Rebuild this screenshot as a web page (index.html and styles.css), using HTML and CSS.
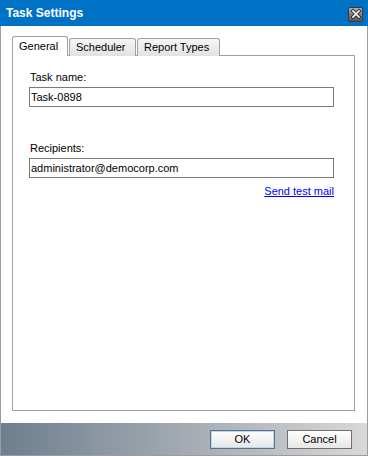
FILE: index.html
```html
<!DOCTYPE html>
<html lang="en">

<head>
  <meta charset="UTF-8">
  <meta name="viewport" content="width=device-width, initial-scale=1.0">
  <title>Task Settings</title>
  <link rel="stylesheet" href="styles.css">
</head>

<body>
  <div class="dialog">
    <div class="titlebar">
      <span class="title">Task Settings</span>
      <span class="close-btn">
        <svg width="12" height="12" viewBox="0 0 12 12">
          <path d="M3 3 L9 9 M9 3 L3 9" stroke="#2e2e2e" stroke-width="3.6" stroke-linecap="square" fill="none" />
          <path d="M3 3 L9 9 M9 3 L3 9" stroke="#ffffff" stroke-width="1.7" stroke-linecap="square" fill="none" />
        </svg>
      </span>
    </div>

    <div class="content">
      <!-- Tabs -->
      <div class="tabs">
        <div class="tab active">General</div>
        <div class="tab">Scheduler</div>
        <div class="tab">Report Types</div>
      </div>

      <div class="pane">
        <div class="field">
          <label class="label">Task name:</label>
          <div class="input">Task-0898</div>
        </div>

        <div class="field recipients">
          <label class="label">Recipients:</label>
          <div class="input">administrator@democorp.com</div>
          <a class="link" href="#">Send test mail</a>
        </div>
      </div>
    </div>

    <!-- Button bar -->
    <div class="footer">
      <button class="btn default">OK</button>
      <button class="btn">Cancel</button>
    </div>
  </div>
</body>

</html>
```

FILE: styles.css
```css
* {
  margin: 0;
  padding: 0;
  box-sizing: border-box;
}

body {
  font-family: 'Liberation Sans', Arial, sans-serif;
  font-size: 11px;
  color: #000;
  background: #fff;
}

.dialog {
  width: 368px;
  height: 456px;
  display: flex;
  flex-direction: column;
  border: 1px solid #9c9c9c;
  border-top: none;
  background: #fff;
}

.titlebar {
  height: 26px;
  background: #0072c6;
  display: flex;
  align-items: center;
  justify-content: space-between;
  padding: 0 5px 0 6px;
  margin: 0 -1px;
}

.title {
  color: #fff;
  font-weight: bold;
  font-size: 12px;
}

.close-btn {
  width: 15px;
  height: 15px;
  border: 1px solid #3a3a3a;
  border-radius: 2px;
  background: linear-gradient(#b0b0b0, #555555);
  display: flex;
  align-items: center;
  justify-content: center;
  margin-top: 2px;
}

.content {
  flex: 1;
  display: flex;
  flex-direction: column;
  padding: 10px 12px 12px 11px;
}

.tabs {
  display: flex;
  align-items: flex-end;
  height: 20px;
  position: relative;
  z-index: 1;
}

.tab {
  height: 18px;
  padding-left: 6px;
  border: 1px solid #a0a0a0;
  border-bottom: none;
  border-radius: 3px 3px 0 0;
  background: linear-gradient(#f6f6f6, #e2e2e2);
  line-height: 16px;
  white-space: nowrap;
  margin-left: 1px;
}

.tab.active {
  width: 56px;
  height: 20px;
  background: #fff;
  padding: 1px 0 0 6px;
  margin-left: 0;
}

.tab:nth-child(2) {
  width: 67px;
}

.tab:nth-child(3) {
  width: 83px;
  margin-left: 1px;
}

.pane {
  flex: 1;
  border: 1px solid #a0a0a0;
  margin-top: -1px;
  padding: 14px 20px 0 16px;
}

.field {
  display: flex;
  flex-direction: column;
}

.label {
  padding-left: 1px;
  margin-bottom: 3px;
  line-height: 14px;
}

.input {
  height: 20px;
  border: 1px solid #7a7a7a;
  padding-left: 1px;
  line-height: 18px;
}

.recipients {
  margin-top: 34px;
}

.link {
  align-self: flex-end;
  color: #0000ff;
  text-decoration: underline;
  margin-top: 6px;
  line-height: 14px;
}

.footer {
  height: 32px;
  background: linear-gradient(to right, #6e7f8f 0%, #a3aab1 50%, #d8d8d8 100%);
  display: flex;
  align-items: center;
  justify-content: flex-end;
  gap: 12px;
  padding-right: 15px;
}

.btn {
  width: 65px;
  height: 19px;
  font-family: 'Liberation Sans', Arial, sans-serif;
  font-size: 11px;
  border: 1px solid #707070;
  background: linear-gradient(#ffffff, #e6e6e6);
  color: #000;
}

.btn.default {
  border-color: #5d6f80;
  box-shadow: inset 0 0 0 1px #b8d8f0;
}
```
